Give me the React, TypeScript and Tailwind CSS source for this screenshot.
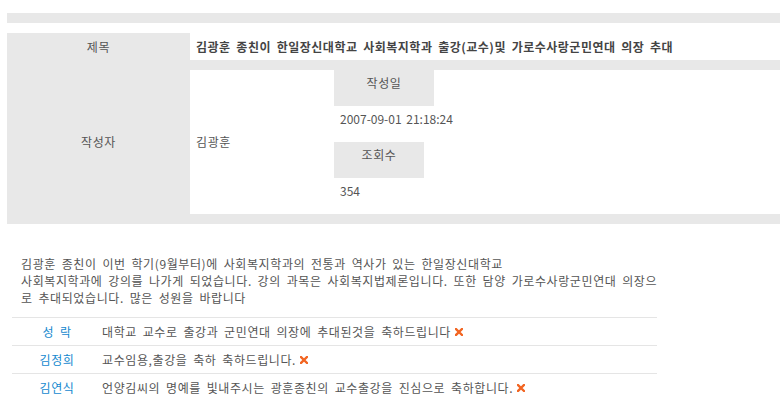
import React from "react";

const font = { fontFamily: '"Noto Sans CJK KR", "Noto Sans", sans-serif' };

function XIcon() {
  return (
    <svg width="8" height="8" viewBox="0 0 8 8" className="inline-block ml-[4px] align-[-1px]">
      <path d="M1 1 L7 7 M7 1 L1 7" stroke="#f26522" strokeWidth="2.4" strokeLinecap="square" />
    </svg>
  );
}

const comments = [
  { name: "성 락", text: "대학교 교수로 출강과 군민연대 의장에 추대된것을 축하드립니다" },
  { name: "김정희", text: "교수임용,출강을 축하 축하드립니다." },
  { name: "김연식", text: "언양김씨의 명예를 빛내주시는 광훈종친의 교수출강을 진심으로 축하합니다." },
];

export default function App() {
  return (
    <div
      className="w-[780px] h-[401px] overflow-hidden bg-white text-[12px] text-[#555] tracking-[0.6px] [word-spacing:2.5px]"
      style={font}
    >
      <div className="mt-[13px] ml-[7px] h-[10px] bg-[#e8e8e8]" />
      <div className="mt-[10px] ml-[7px] bg-[#e8e8e8] pb-[10px] flex flex-col gap-[10px]">
        <div className="flex h-[27px]">
          <div className="w-[183px] flex items-center justify-center">제목</div>
          <div className="flex-1 bg-white flex items-center pl-[6px] font-bold text-[#444] tracking-[0.5px] whitespace-nowrap">
            김광훈 종친이 한일장신대학교 사회복지학과 출강(교수)및 가로수사랑군민연대 의장 추대
          </div>
        </div>
        <div className="flex h-[144px]">
          <div className="w-[183px] flex items-center justify-center">작성자</div>
          <div className="flex-1 bg-white flex items-center">
            <div className="w-[144px] pl-[6px]">김광훈</div>
            <div className="flex flex-col self-stretch">
              <div className="w-[100px] h-[36px] bg-[#e8e8e8] text-center pt-[5px] leading-[16px]">작성일</div>
              <div className="h-[36px] pl-[6px] pt-[5px] leading-[16px] tracking-normal [word-spacing:2px]">2007-09-01 21:18:24</div>
              <div className="w-[90px] h-[36px] bg-[#e8e8e8] text-center pt-[5px] leading-[16px]">조회수</div>
              <div className="h-[36px] pl-[6px] pt-[5px] leading-[16px] tracking-normal">354</div>
            </div>
          </div>
        </div>
      </div>
      <div className="mt-[31px] ml-[21px] leading-[17px] whitespace-nowrap">
        김광훈 종친이 이번 학기(9월부터)에 사회복지학과의 전통과 역사가 있는 한일장신대학교
        <br />
        사회복지학과에 강의를 나가게 되었습니다. 강의 과목은 사회복지법제론입니다. 또한 담양 가로수사랑군민연대 의장으
        <br />
        로 추대되었습니다. 많은 성원을 바랍니다
      </div>
      <div className="mt-[11px] ml-[12px] w-[645px]">
        {comments.map((c) => (
          <div key={c.name} className="flex items-center h-[28px] border-t border-[#e5e5e5]">
            <div className="w-[90px] text-center text-[#1589cf]">{c.name}</div>
            <div className="flex items-center whitespace-nowrap">
              <span>{c.text}</span>
              <XIcon />
            </div>
          </div>
        ))}
      </div>
    </div>
  );
}
